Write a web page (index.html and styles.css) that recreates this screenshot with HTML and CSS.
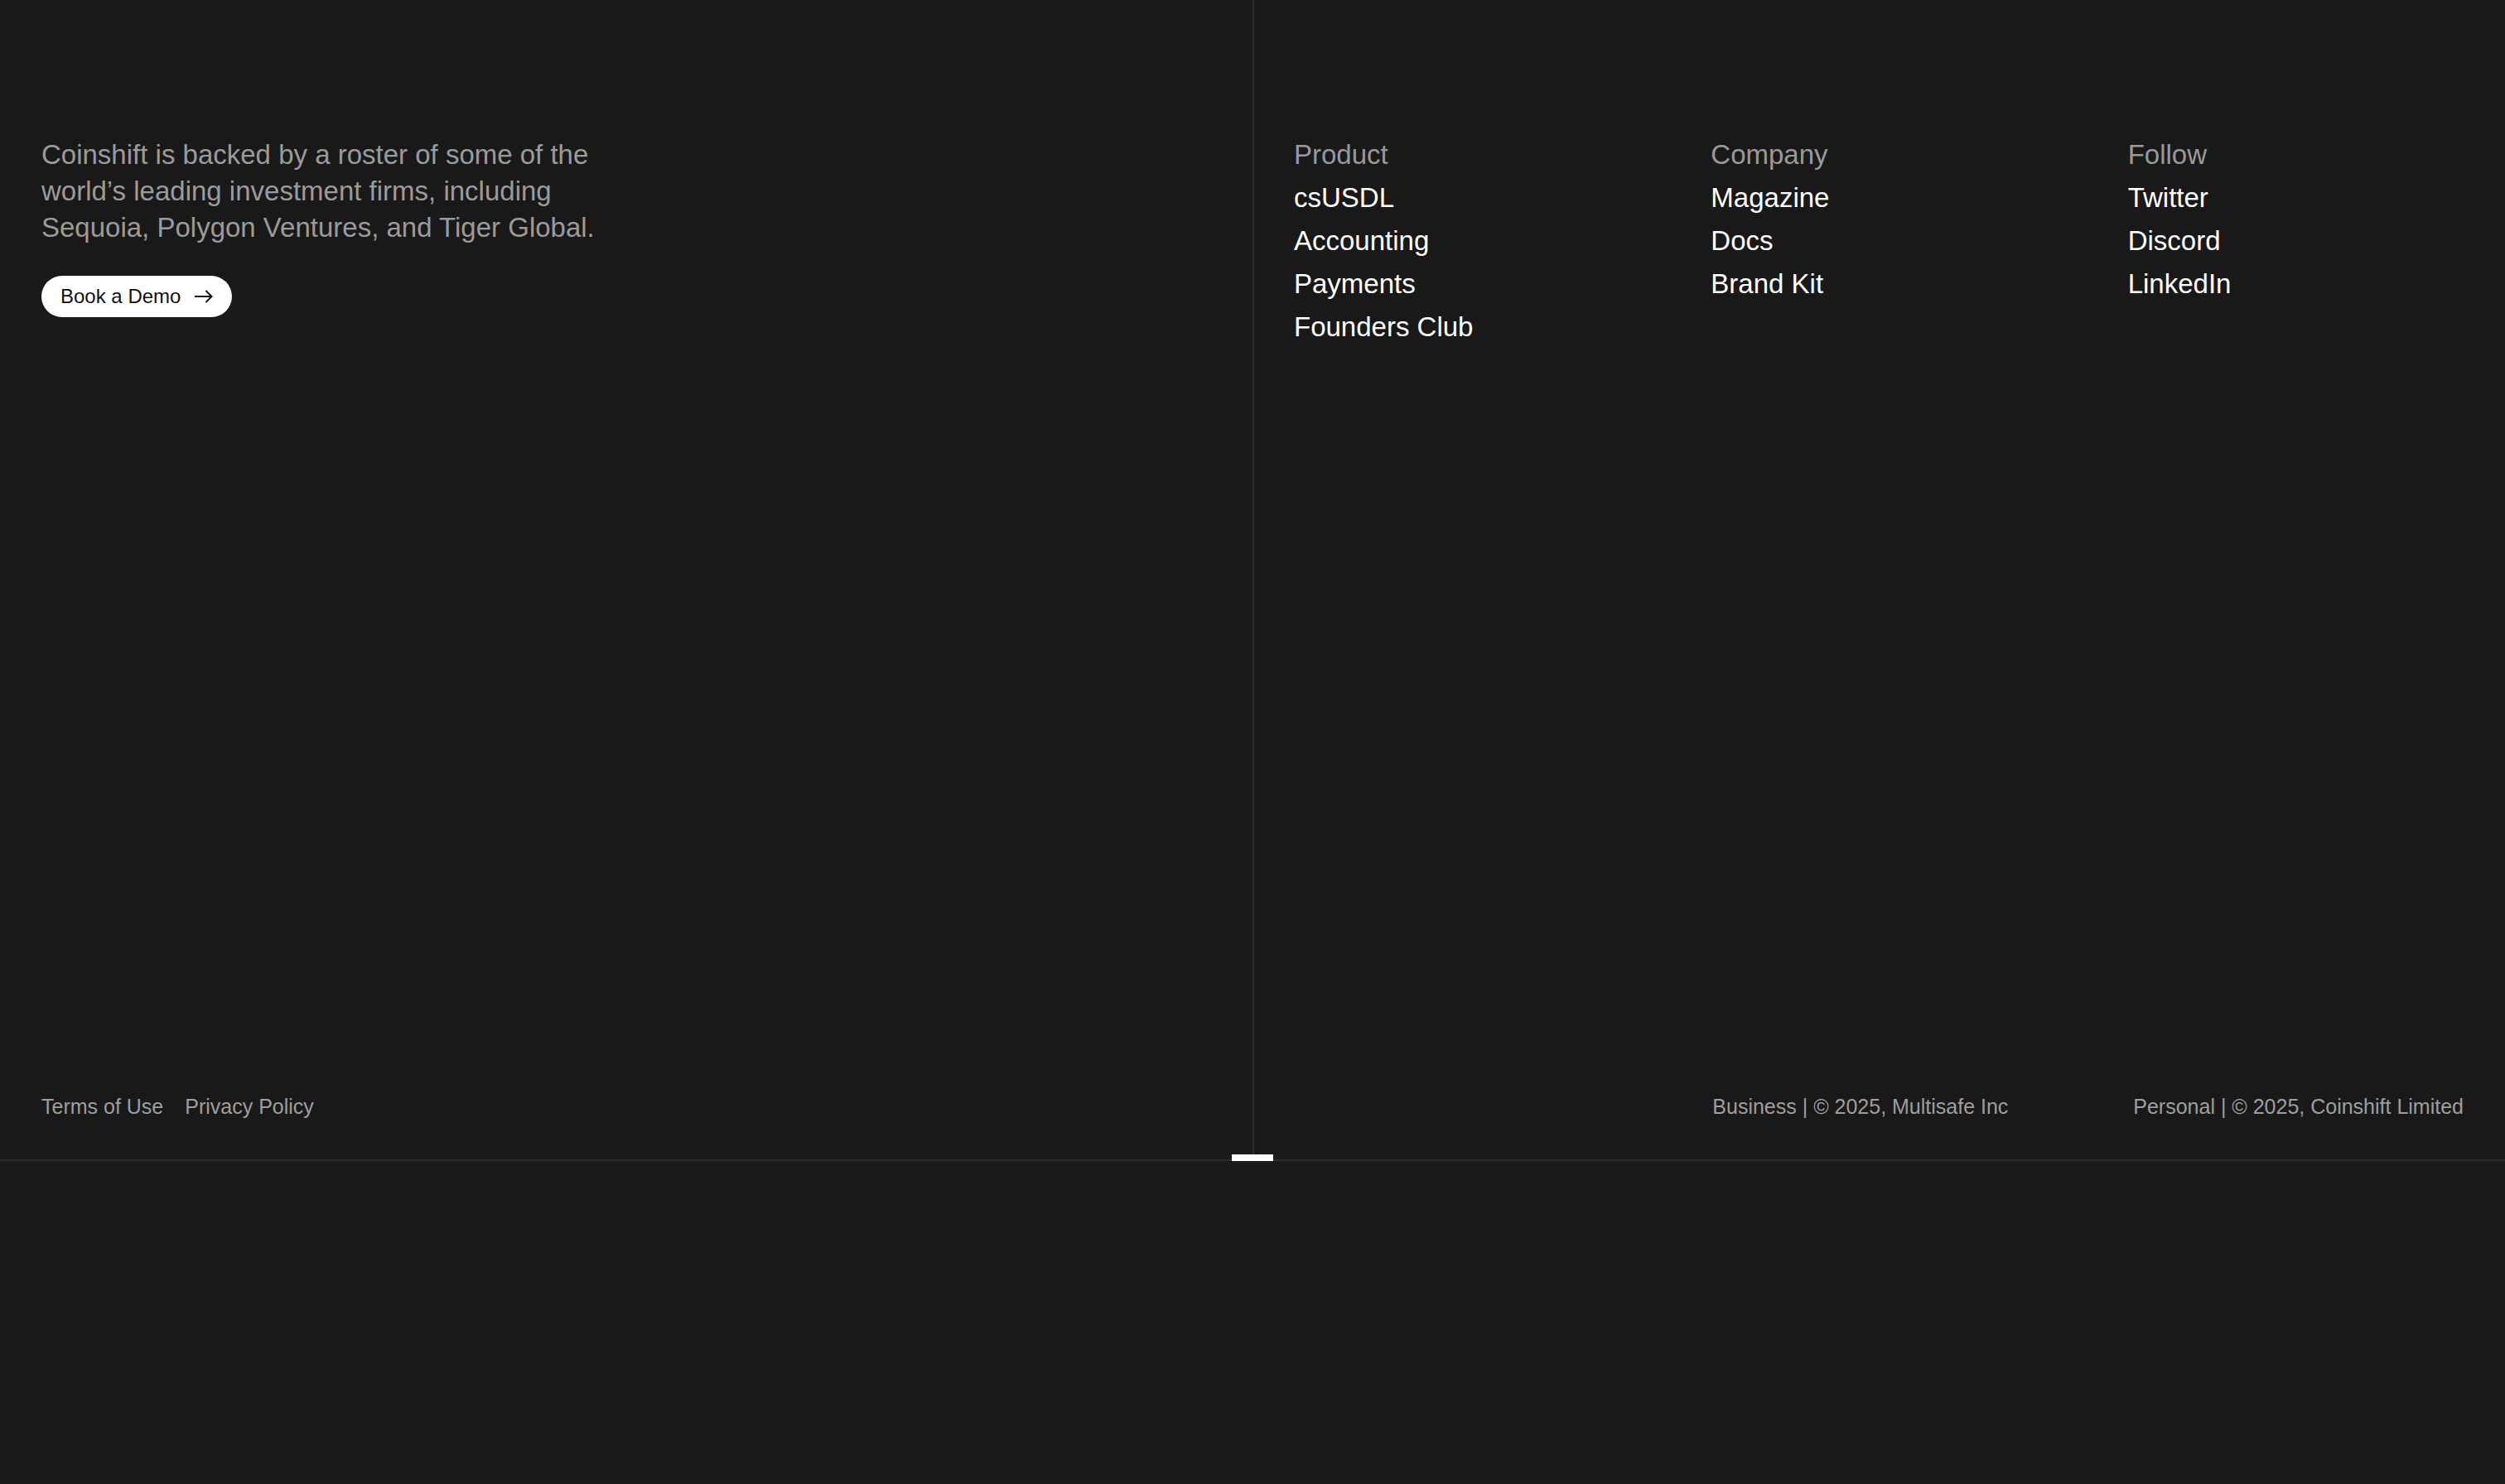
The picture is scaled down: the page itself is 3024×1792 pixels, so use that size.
FILE: index.html
```html
<!DOCTYPE html>
<html lang="en">
<head>
  <meta charset="utf-8">
  <link rel="stylesheet" href="styles.css">
  <title>Coinshift</title>
</head>
<body>
  <footer class="site-footer">
    <div class="footer-main">
      <div class="footer-left">
        <div class="about">
          <p class="about-text">Coinshift is backed by a roster of some of the world’s leading investment firms, including Sequoia, Polygon Ventures, and Tiger Global.</p>
          <a class="demo-button" href="#">
            Book a Demo
            <svg class="arrow" width="22" height="16" viewBox="0 0 22 16" fill="none" stroke="currentColor" stroke-width="2">
              <path d="M0 8H20.5"/>
              <path d="M13.5 1L20.5 8L13.5 15"/>
            </svg>
          </a>
        </div>
        <div class="legal">
          <a href="#">Terms of Use</a>
          <a href="#">Privacy Policy</a>
        </div>
      </div>

      <div class="footer-right">
        <div class="link-cols">
          <div class="link-col">
            <p class="col-title">Product</p>
            <a href="#">csUSDL</a>
            <a href="#">Accounting</a>
            <a href="#">Payments</a>
            <a href="#">Founders Club</a>
          </div>
          <div class="link-col">
            <p class="col-title">Company</p>
            <a href="#">Magazine</a>
            <a href="#">Docs</a>
            <a href="#">Brand Kit</a>
          </div>
          <div class="link-col">
            <p class="col-title">Follow</p>
            <a href="#">Twitter</a>
            <a href="#">Discord</a>
            <a href="#">LinkedIn</a>
          </div>
        </div>
        <div class="copyright">
          <span></span>
          <span>Business | © 2025, Multisafe Inc</span>
          <span class="copy-right">Personal | © 2025, Coinshift Limited</span>
        </div>
      </div>
    </div>
    <span class="footer-marker"></span>
  </footer>
</body>
</html>
```

FILE: styles.css
```css
body {
  margin: 0;
  background-color: #191919;
  color: #ffffff;
  font-family: "Liberation Sans", Arial, Helvetica, sans-serif;
  min-height: 1792px;
}

a {
  color: inherit;
  text-decoration: none;
}

p {
  margin: 0;
}

.site-footer {
  position: relative;
  border-bottom: 2px solid #2d2d2d;
}

.footer-main {
  display: grid;
  grid-template-columns: 1512px 1fr;
  height: 1400px;
}

/* left half */
.footer-left {
  display: flex;
  flex-direction: column;
  justify-content: space-between;
  padding: 165px 50px 48px 50px;
}

.about-text {
  max-width: 700px;
  font-size: 33px;
  line-height: 44px;
  color: #9b9b9b;
}

.demo-button {
  display: inline-flex;
  align-items: center;
  gap: 17px;
  height: 50px;
  margin-top: 36px;
  padding: 0 23px;
  border-radius: 25px;
  background-color: #ffffff;
  color: #111111;
  font-size: 24px;
}

.legal {
  display: flex;
  gap: 26px;
  font-size: 25px;
  line-height: 32px;
  color: #9e9e9e;
}

/* right half */
.footer-right {
  display: flex;
  flex-direction: column;
  justify-content: space-between;
  border-left: 2px solid #2d2d2d;
  padding: 161px 0 48px 0;
}

.link-cols,
.copyright {
  display: grid;
  grid-template-columns: repeat(3, 1fr);
}

.link-col {
  display: flex;
  flex-direction: column;
  padding: 0 50px 0 48px;
  font-size: 33px;
  line-height: 52px;
}

.col-title {
  color: #999999;
}

.copyright span {
  padding: 0 50px 0 50px;
  font-size: 25px;
  line-height: 32px;
  color: #9e9e9e;
  white-space: nowrap;
}

.copyright .copy-right {
  text-align: right;
}

/* small white tab sitting on the bottom rule */
.footer-marker {
  position: absolute;
  left: 1487px;
  bottom: -2px;
  width: 50px;
  height: 8px;
  background-color: #ffffff;
}
```
